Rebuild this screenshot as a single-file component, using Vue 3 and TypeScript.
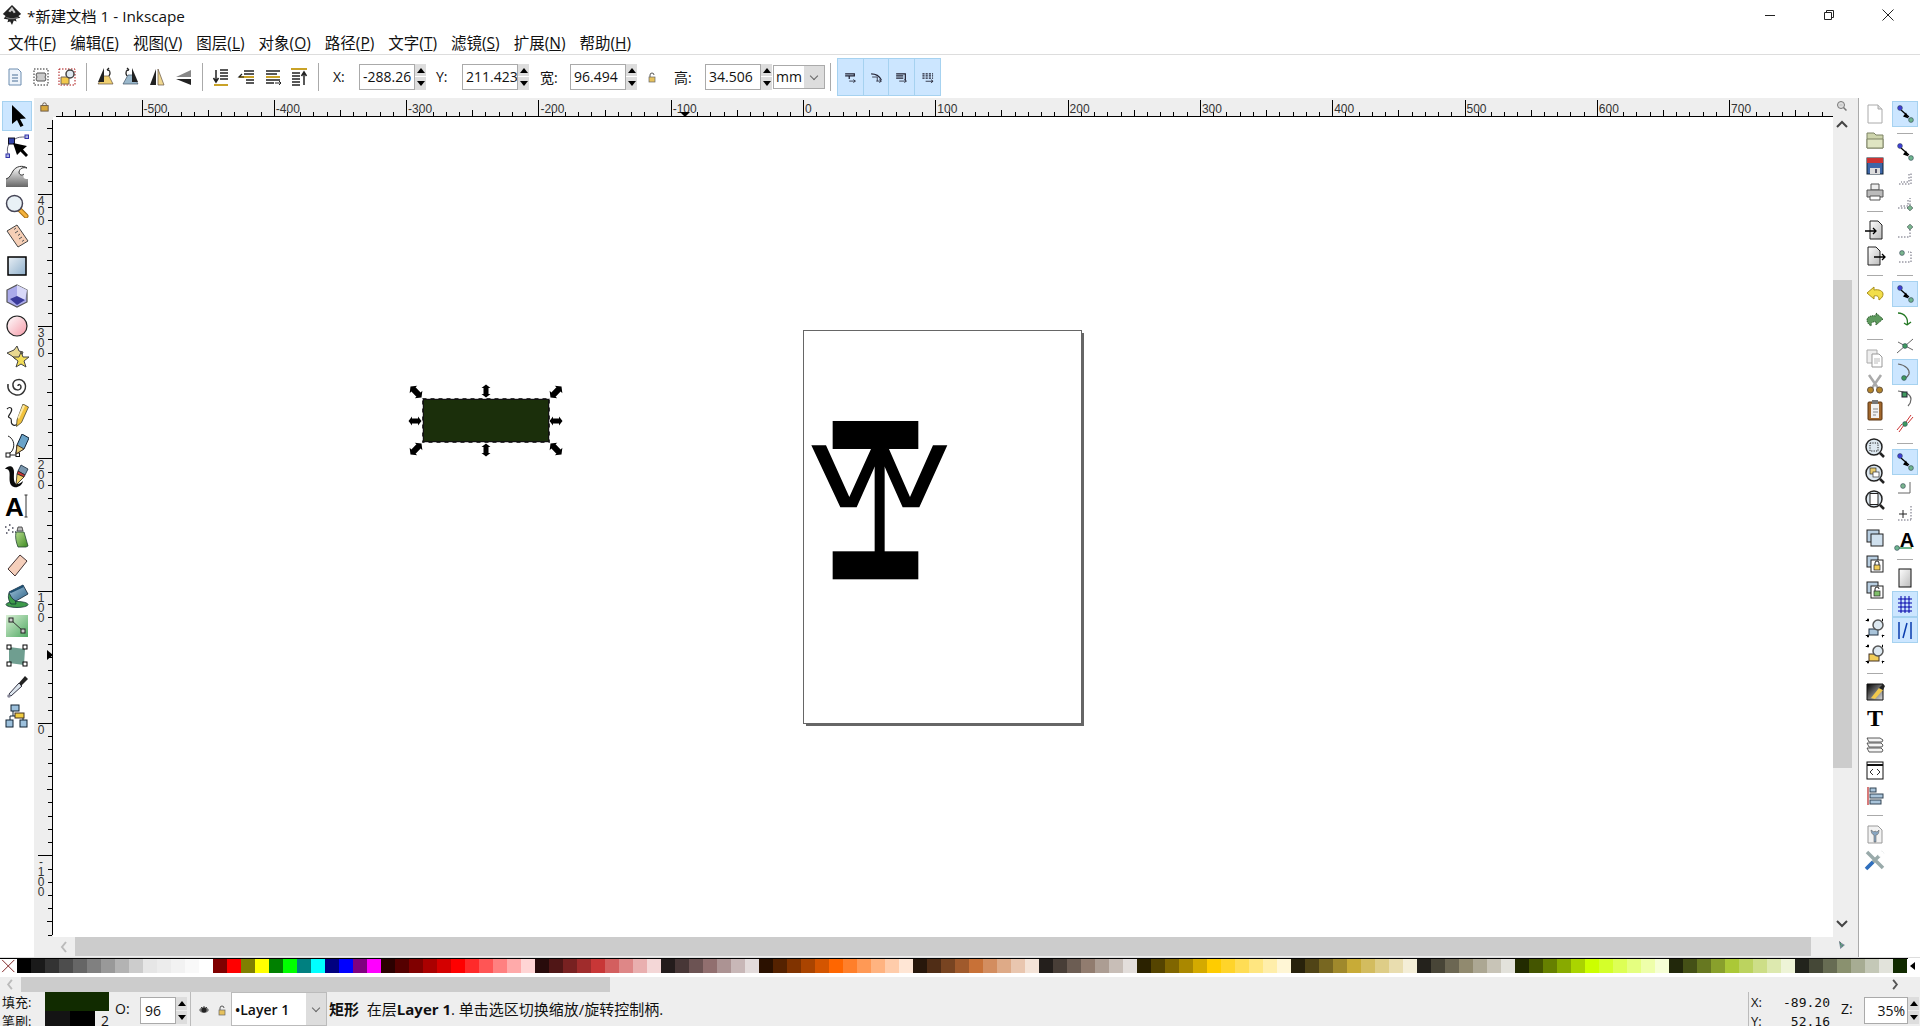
<template>
  <div class="app">
    <svg class="defs" width="0" height="0">
      <defs>
        <linearGradient id="gBlue" x1="0" y1="0" x2="1" y2="1"><stop offset="0" stop-color="#e8eff5" /><stop offset="1" stop-color="#8fb0cc" /></linearGradient>
        <linearGradient id="gPink" x1="0" y1="0" x2="1" y2="1"><stop offset="0" stop-color="#fff" /><stop offset="1" stop-color="#f59aa8" /></linearGradient>
        <linearGradient id="gGreen" x1="0" y1="0" x2="1" y2="1"><stop offset="0" stop-color="#d9f0d5" /><stop offset="1" stop-color="#4fa862" /></linearGradient>
        <linearGradient id="gGray" x1="0" y1="0" x2="0" y2="1"><stop offset="0" stop-color="#fff" /><stop offset="1" stop-color="#666" /></linearGradient>
        <linearGradient id="gDoc" x1="0" y1="0" x2="1" y2="1"><stop offset="0" stop-color="#fff" /><stop offset="1" stop-color="#bbb" /></linearGradient>
        <linearGradient id="gStroke" x1="0" y1="0" x2="1" y2="1"><stop offset="0" stop-color="#000" /><stop offset="1" stop-color="#ddd" /></linearGradient>
        <linearGradient id="gCan" x1="0" y1="0" x2="1" y2="1"><stop offset="0" stop-color="#b7dc8c" /><stop offset="1" stop-color="#3d8a22" /></linearGradient>
        <linearGradient id="gBucket" x1="0" y1="0" x2="1" y2="1"><stop offset="0" stop-color="#a9cbe0" /><stop offset="1" stop-color="#2f6488" /></linearGradient>
      </defs>
    </svg>

    <div class="titlebar">
      <svg class="logo" viewBox="0 0 24 24">
        <path d="M12 1 22 11l-3 2 2 2-5 1 1 3-3-1-2 5-2-4-3 1 1-3-5-1 2-3-3-2z" fill="#222" />
        <path d="M12 3 8 8l2 1 2-2 2 3 2-1z" fill="#ccc" />
        <path d="M4 13c5 3 11 3 16 0-3 5-13 5-16 0z" fill="#777" />
      </svg>
      <span class="title">*新建文档 1 - Inkscape</span>
      <div class="winbtns">
        <svg viewBox="0 0 12 12"><path d="M1 6.5h10" stroke="#222" fill="none" /></svg>
        <svg viewBox="0 0 12 12"><path d="M1.5 3.5h7v7h-7zM3.5 3.5v-2h7v7h-2" stroke="#222" fill="none" /></svg>
        <svg viewBox="0 0 12 12"><path d="M.5.5l11 11M11.5.5l-11 11" stroke="#222" fill="none" /></svg>
      </div>
    </div>

    <div class="menubar">
      <span v-for="m in menus" :key="m.label" class="menu">{{ m.label }}(<u>{{ m.key }}</u>)</span>
    </div>

    <div class="toolbar">
      <template v-for="(it, i) in selectBar" :key="i">
        <i v-if="it === '|'" class="vsep"></i>
        <svg v-else class="tbicon" viewBox="0 0 24 24" v-html="icons[it]"></svg>
      </template>
      <label class="flabel x">X:</label>
      <input class="num" value="-288.26" readonly />
      <span class="spin"><b class="up"></b><b class="down"></b></span>
      <label class="flabel y">Y:</label>
      <input class="num" value="211.423" readonly />
      <span class="spin"><b class="up"></b><b class="down"></b></span>
      <label class="flabel w">宽:</label>
      <input class="num" value="96.494" readonly />
      <span class="spin"><b class="up"></b><b class="down"></b></span>
      <svg class="smalllock" viewBox="0 0 12 12" v-html="icons.lock"></svg>
      <label class="flabel h">高:</label>
      <input class="num" value="34.506" readonly />
      <span class="spin"><b class="up"></b><b class="down"></b></span>
      <div class="unit"><span>mm</span><i class="chev"></i></div>
      <i class="vsep last"></i>
      <div class="transforms">
        <svg v-for="t in ['tf1', 'tf2', 'tf3', 'tf4']" :key="t" viewBox="0 0 24 24" v-html="icons[t]"></svg>
      </div>
    </div>

    <div class="workspace">
      <div class="toolbox">
        <div v-for="(t, i) in tools" :key="t" class="tool" :class="{ on: i === 0 }">
          <svg viewBox="0 0 24 24" v-html="icons[t]"></svg>
        </div>
      </div>

      <div class="center">
        <svg class="hruler" viewBox="34 98 1799 19">
          <rect x="34" y="98" width="1799" height="19" fill="#eeeeee" />
          <svg x="39" y="101" width="11" height="11" viewBox="0 0 12 12" v-html="icons.rulerLock"></svg>
          <path d="M56 116.5H1833" stroke="#000" />
          <path v-for="t in hTicks" :key="t.x" :d="`M${t.x} 116V${116 - t.len}`" stroke="#000" />
          <text v-for="l in hLabels" :key="l.x" :x="l.x + 2" y="113" class="rtext">{{ l.text }}</text>
          <path d="M680 112h10l-5 5z" fill="#000" />
        </svg>
        <div class="canvasrow">
          <svg class="vruler" viewBox="34 117 19 820">
            <rect x="34" y="117" width="19" height="820" fill="#eeeeee" />
            <path d="M52.5 120V935" stroke="#000" />
            <path v-for="t in vTicks" :key="t.y" :d="`M52 ${t.y}H${52 - t.len}`" stroke="#000" />
            <template v-for="l in vLabels" :key="l.y">
              <text v-for="(c, k) in l.text" :key="k" x="41" :y="l.y + 11 + k * 10" class="rtext mid">{{ c }}</text>
            </template>
            <path d="M47 650l6 5-6 5z" fill="#000" />
          </svg>
          <svg class="canvas" viewBox="53 117 1780 820">
            <rect x="806" y="333" width="278" height="393" fill="#666" />
            <rect x="803.5" y="330.5" width="278" height="393" fill="#fff" stroke="#666" />
            <g transform="translate(790 320) scale(0.3333)">
              <rect x="128" y="303" width="257" height="84" />
              <rect x="128" y="694" width="257" height="84" />
              <rect x="254" y="380" width="30" height="320" />
              <path d="M64 376h44l70 155 65-144h54l63 144 69-155h43l-84 186h-50L284 440h-30l-54 122h-49z" />
            </g>
            <rect x="423" y="399" width="126" height="43" fill="#1b2f0b" stroke="#111" stroke-width="2" />
            <rect x="422.5" y="398.5" width="127" height="44" fill="none" stroke="#ccc" />
            <rect x="422.5" y="398.5" width="127" height="44" fill="none" stroke="#333" stroke-dasharray="4 4" />
            <path
              v-for="h in handles"
              :key="h.x + '-' + h.y"
              d="M-6.5 0-3-4.5V-2.500H3V-4.500L6.500 0 3 4.500V2.500H-3V4.500Z"
              :transform="`translate(${h.x} ${h.y}) rotate(${h.r}) scale(${h.s})`"
            />
          </svg>
        </div>
        <div class="hscroll">
          <svg class="arrow" viewBox="0 0 10 14"><path d="M7 2 3 7l4 5" fill="none" stroke="#bbb" stroke-width="2" /></svg>
          <div class="hthumb"></div>
        </div>
      </div>

      <div class="vscroll">
        <svg class="zoomfit" viewBox="0 0 24 24" v-html="icons.zoomSmall"></svg>
        <svg class="vup" viewBox="0 0 14 10"><path d="M2 8l5-5 5 5" fill="none" stroke="#444" stroke-width="2" /></svg>
        <div class="vthumb"></div>
        <svg class="vdown" viewBox="0 0 14 10"><path d="M2 2l5 5 5-5" fill="none" stroke="#444" stroke-width="2" /></svg>
        <svg class="cmsicon" viewBox="0 0 24 24" v-html="icons.cms"></svg>
      </div>

      <div class="rightbars">
        <div class="rcol">
          <template v-for="(it, i) in commands" :key="i">
            <div v-if="it === '|'" class="hsep"></div>
            <div v-else class="rbtn"><svg viewBox="0 0 24 24" v-html="icons[it]"></svg></div>
          </template>
        </div>
        <div class="rcol snaps">
          <template v-for="(it, i) in snaps" :key="i">
            <div v-if="it === '|'" class="hsep"></div>
            <div v-else class="rbtn" :class="{ on: it.endsWith('!') }">
              <svg viewBox="0 0 24 24" v-html="icons[it.replace('!', '')]"></svg>
            </div>
          </template>
        </div>
      </div>
    </div>

    <div class="palette">
      <svg class="nocolor" viewBox="0 0 15 15"><rect width="15" height="15" fill="#fff" /><path d="M1 1l13 13M14 1 1 14" stroke="#7a1a1a" /></svg>
      <div class="swatches">
        <i v-for="(c, i) in swatches" :key="i" :style="{ background: c }"></i>
      </div>
      <span class="palarrow"></span>
    </div>

    <div class="palscroll">
      <svg class="parrow" viewBox="0 0 10 14"><path d="M7 2 3 7l4 5" fill="none" stroke="#bbb" stroke-width="2" /></svg>
      <div class="palthumb"></div>
      <svg class="parrow right" viewBox="0 0 10 14"><path d="M3 2l4 5-4 5" fill="none" stroke="#555" stroke-width="2" /></svg>
    </div>

    <div class="statusbar">
      <div class="fslabels"><span>填充:</span><span>笔刷:</span></div>
      <div class="fsboxes">
        <div class="fillbox"></div>
        <div class="strokerow"><div class="strokebox"><i></i><i></i></div><span>2</span></div>
      </div>
      <span class="olabel">O:</span>
      <input class="num opacity" value="96" readonly />
      <span class="spin"><b class="up"></b><b class="down"></b></span>
      <i class="stsep"></i>
      <svg class="eye" viewBox="0 0 12 12" v-html="icons.eye"></svg>
      <svg class="stlock" viewBox="0 0 12 12" v-html="icons.lock"></svg>
      <div class="layer"><span>•Layer 1</span><i class="chev"></i></div>
      <div class="message"><b>矩形</b>&nbsp; 在层<b>Layer 1</b>. 单击选区切换缩放/旋转控制柄.</div>
      <i class="stsep coords"></i>
      <div class="xy">
        <div><span>X:</span><code>-89.20</code></div>
        <div><span>Y:</span><code>52.16</code></div>
      </div>
      <span class="zlabel">Z:</span>
      <input class="num zoom" value="35%" readonly />
      <span class="spin"><b class="up"></b><b class="down"></b></span>
    </div>
  </div>
</template>

<script setup lang="ts">
const menus = [
  { label: '文件', key: 'F' },
  { label: '编辑', key: 'E' },
  { label: '视图', key: 'V' },
  { label: '图层', key: 'L' },
  { label: '对象', key: 'O' },
  { label: '路径', key: 'P' },
  { label: '文字', key: 'T' },
  { label: '滤镜', key: 'S' },
  { label: '扩展', key: 'N' },
  { label: '帮助', key: 'H' },
]

const selectBar = ['selAll', 'selLayers', 'selSame', '|', 'rotL', 'rotR', 'flipH', 'flipV', '|', 'raiseTop', 'raise', 'lower', 'lowerBot', '|']

const tools = ['select', 'node', 'tweak', 'zoom', 'measure', 'rect', 'box3d', 'circle', 'star', 'spiral', 'pencil', 'pen', 'callig', 'text', 'spray', 'eraser', 'bucket', 'gradient', 'mesh', 'dropper', 'connector']

const commands = [
  'new', 'open', 'save', 'print', '|', 'import', 'export', '|', 'undo', 'redo', '|',
  'copy', 'cut', 'paste', '|', 'zoomSel', 'zoomDraw', 'zoomPage', '|',
  'dup', 'clone', 'unlink', '|', 'group', 'ungroup', '|',
  'fillStroke', 'textT', 'layers', 'xml', 'align', '|', 'prefs', 'toolsW',
]

const snaps = [
  'snapOn!', '|', 'snapOn', 'bbox1', 'bbox2', 'bbox3', 'bbox4', '|',
  'snapOn!', 'path1', 'path2', 'path3!', 'path4', 'path5', '|',
  'snapOn!', 'other1', 'other2', 'otherA', '|', 'pageSnap', 'grid!', 'guide!',
]

// canvas scale: 100 user units = 132.3 px, origin at x 803 / y 723
const hTicks: { x: number; len: number }[] = []
for (let i = -56; i < 78; i++) {
  const x = Math.round(803 + i * 13.23) + 0.5
  if (x > 56) hTicks.push({ x, len: i % 10 === 0 ? 16 : i % 5 === 0 ? 6 : 4 })
}
const hLabels = [-500, -400, -300, -200, -100, 0, 100, 200, 300, 400, 500, 600, 700].map((v) => ({
  x: 803 + v * 1.323,
  text: String(v),
}))

const vTicks: { y: number; len: number }[] = []
for (let i = -16; i <= 45; i++) {
  const y = Math.round(723 - i * 13.23) + 0.5
  if (y > 120 && y < 936) vTicks.push({ y, len: i % 10 === 0 ? 14 : i % 5 === 0 ? 5 : 4 })
}
const vLabels = [400, 300, 200, 100, 0, -100].map((v) => ({ y: 723 - v * 1.323, text: String(v) }))

const handles = [
  { x: 416, y: 392, r: 45, s: 1.2 },
  { x: 486, y: 391, r: 90, s: 1 },
  { x: 556, y: 392, r: -45, s: 1.2 },
  { x: 415, y: 421, r: 0, s: 1 },
  { x: 556, y: 421, r: 0, s: 1 },
  { x: 416, y: 449, r: -45, s: 1.2 },
  { x: 486, y: 450, r: 90, s: 1 },
  { x: 556, y: 449, r: 45, s: 1.2 },
]

const swatches = [
  '#000000', '#1a1a1a', '#333333', '#4d4d4d', '#666666', '#808080', '#999999', '#b3b3b3', '#cccccc', '#e6e6e6', '#ececec', '#f2f2f2', '#f9f9f9', '#ffffff',
  '#800000', '#ff0000', '#808000', '#ffff00', '#008000', '#00ff00', '#008080', '#00ffff', '#000080', '#0000ff', '#800080', '#ff00ff',
  '#2b0000', '#550000', '#800000', '#aa0000', '#d40000', '#ff0000', '#ff2a2a', '#ff5555', '#ff8080', '#ffaaaa', '#ffd5d5',
  '#280b0b', '#501616', '#782121', '#a02c2c', '#c83737', '#d35f5f', '#de8787', '#e9afaf', '#f4d7d7',
  '#241c1c', '#483737', '#6c5353', '#916f6f', '#ac9393', '#c8b7b7', '#e3dbdb',
  '#2b1100', '#552200', '#803300', '#aa4400', '#d45500', '#ff6600', '#ff7f2a', '#ff9955', '#ffb380', '#ffccaa', '#ffe6d5',
  '#28170b', '#502d16', '#784421', '#a05a2c', '#c87137', '#d38d5f', '#deaa87', '#e9c6af', '#f4e3d7',
  '#241f1c', '#483e37', '#6c5d53', '#917c6f', '#ac9d93', '#c8beb7', '#e3dedb',
  '#2b2200', '#554400', '#806600', '#aa8800', '#d4aa00', '#ffcc00', '#ffd42a', '#ffdd55', '#ffe680', '#ffeeaa', '#fff6d5',
  '#28220b', '#504416', '#786721', '#a0892c', '#c8ab37', '#d3bc5f', '#decd87', '#e9ddaf', '#f4eed7',
  '#24221c', '#484537', '#6c6753', '#918a6f', '#aca793', '#c8c4b7', '#e3e2db',
  '#222b00', '#445500', '#668000', '#88aa00', '#aad400', '#ccff00', '#d4ff2a', '#ddff55', '#e5ff80', '#eeffaa', '#f6ffd5',
  '#22280b', '#445016', '#677821', '#89a02c', '#abc837', '#bcd35f', '#cdde87', '#dde9af', '#eef4d7',
  '#22241c', '#454837', '#676c53', '#8a916f', '#a7ac93', '#c4c8b7', '#e2e3db',
  '#112b00',
]

const nodeDot = (x: number, y: number, c: string) => `<circle cx="${x}" cy="${y}" r="2.4" fill="${c}" stroke="#345" stroke-width=".6"/>`
const dotted = 'stroke="#667" stroke-dasharray="1.500 1.500" fill="none"'
const greenNode = (x: number, y: number) => `<rect x="${x - 2}" y="${y - 2}" width="4" height="4" transform="rotate(45 ${x} ${y})" fill="#7ab58e" stroke="#344" stroke-width=".6"/>`

const icons: Record<string, string> = {
  // select bar
  selAll: '<path d="M6 4h9l3 3v13H6z" fill="#eef4fb" stroke="#6c8db0"/><path d="M9 10h6M9 13h6M9 16h6" stroke="#4a6f95"/>',
  selLayers: '<rect x="5" y="4" width="14" height="16" fill="none" stroke="#222" stroke-dasharray="1.500 1.500"/><path d="M8 8h8l1 2-1 2 1 2-1 2H8l-1-2 1-2-1-2z" fill="#ccc" stroke="#555"/>',
  selSame: '<rect x="4" y="4" width="16" height="16" fill="none" stroke="#a11" stroke-dasharray="1.500 1.500"/><path d="M6 12h8v7H6z" fill="#f2c94c" stroke="#765"/><circle cx="15" cy="9" r="4" fill="#dde8f0" stroke="#444" stroke-width="1.500"/>',
  rotL: '<path d="M5 19h15l-4-8H10z" fill="#f0d070" stroke="#654" stroke-width=".7"/><path d="M11 3v14H5z" fill="#222"/><path d="M14 5c3 0 4 3 2 6M14 5l2-2M14 5l3 1" fill="none" stroke="#222" stroke-width="1.300"/>',
  rotR: '<path d="M4 19h15l-5-9H9z" fill="#9ab8cc" stroke="#456" stroke-width=".7"/><path d="M13 3v14h6z" fill="#222"/><path d="M10 5c-3 0-4 3-2 6M10 5 8 3M10 5 7 6" fill="none" stroke="#222" stroke-width="1.300"/>',
  flipH: '<path d="M11 4v16H5z" fill="#222"/><path d="M13 4v16h6z" fill="#f0d890" stroke="#654" stroke-width=".7"/>',
  flipV: '<path d="M20 5v7H5z" fill="#888"/><path d="M20 14v6L5 14z" fill="#222"/><path d="M9 13h11" stroke="#fff" stroke-dasharray="1 1"/>',
  raiseTop: '<path d="M5 20h14" stroke="#c9a227" stroke-width="2"/><path d="M7 5v12M4.500 13 7 17l2.500-4" fill="none" stroke="#222" stroke-width="1.500"/><path d="M11 5h8M11 8h8M11 11h8M11 14h8" stroke="#222" stroke-width="1.500"/>',
  raise: '<path d="M9 6h10M9 9h10M11 15h8M11 18h8" stroke="#222" stroke-width="1.500"/><path d="M4 12h15" stroke="#c9a227" stroke-width="2"/><path d="M9 12 4 12l3-3" fill="none" stroke="#222" stroke-width="1.200"/>',
  lower: '<path d="M5 6h14M5 9h11M5 15h14M5 18h8" stroke="#222" stroke-width="1.500"/><path d="M5 12h14" stroke="#c9a227" stroke-width="2"/><path d="M14 18h6l-2-2m2 2-2 2" fill="none" stroke="#222"/>',
  lowerBot: '<path d="M4 4h16" stroke="#c9a227" stroke-width="2"/><path d="M5 8h8M5 11h8M5 14h8M5 17h8M5 20h8" stroke="#222" stroke-width="1.500"/><path d="M17 20V8M14.500 11 17 7l2.500 4" fill="none" stroke="#222" stroke-width="1.500"/>',
  tf1: '<path d="M7 9h9v2h-5v3M7 11h4" fill="none" stroke="#223" stroke-width="1.200"/><path d="M11 16h6M15 14.500l2 1.500-2 1.500" fill="none" stroke="#223" stroke-width=".8"/>',
  tf2: '<path d="M7 9c5 0 8 2 10 6" fill="none" stroke="#223" stroke-width="1.200"/><path d="M8 12h5v4M12 16h5M15 14.500l2 1.500-2 1.500" fill="none" stroke="#223" stroke-width=".8"/>',
  tf3: '<path d="M7 9h9v6M7 11h7M7 13h7" fill="none" stroke="#223" stroke-width="1.200"/><path d="M10 16h7M15 14.500l2 1.500-2 1.500" fill="none" stroke="#223" stroke-width=".8"/>',
  tf4: '<path d="M7 9h10M7 11h10M7 13h10" stroke="#223" stroke-width="1.200" stroke-dasharray="2 1"/><path d="M10 16h7M15 14.500l2 1.500-2 1.500" fill="none" stroke="#223" stroke-width=".8"/>',
  lock: '<path d="M4 6V4a2 2 0 0 1 4 0" fill="none" stroke="#555"/><rect x="3" y="6" width="6" height="5" fill="#e6c15c" stroke="#666" stroke-width=".7"/>',
  rulerLock: '<path d="M4 5V4a2 2 0 0 1 4 0v1" fill="none" stroke="#654"/><rect x="2" y="5" width="8" height="6" fill="#d8a83c" stroke="#654"/>',
  eye: '<path d="M1 6c2-4 8-4 10 0-2 4-8 4-10 0z" fill="#777"/><circle cx="6" cy="6" r="2.500" fill="#222"/><path d="M3 3l1 1M6 2v1M9 3 8 4" stroke="#444"/>',
  zoomSmall: '<circle cx="10" cy="10" r="7" fill="#ddd" stroke="#777" stroke-width="2"/><path d="M15 15l6 6" stroke="#777" stroke-width="3"/><path d="M7 10h6" stroke="#999"/>',
  cms: '<path d="M7 6l10 6-8 7z" fill="#7a8a9a"/><path d="M8 8l3 2-2 3zM11 13l3-1-2 4z" fill="#3d9a5a"/><path d="M7 6l3 2" stroke="#223"/>',
  // tools
  select: '<path d="M7 1v19l5-4 3.500 7 3-1.500L15 15l6-.5z" fill="#000"/>',
  node: '<path d="M10 5c3-2 6-2 10-2M4 10c-2 3-2 7-1 10" fill="none" stroke="#667"/><rect x="20" y="1" width="3.500" height="3.500" fill="#aab4e0" stroke="#33a"/><rect x="1" y="20" width="3.500" height="3.500" fill="#aab4e0" stroke="#33a"/><rect x="3.500" y="4" width="6" height="6" fill="#3344aa" stroke="#112"/><path d="M8 9l14 3-4 3.500 5 5.500-2 2-5.500-5.500L12 21z" fill="#000"/>',
  tweak: '<path d="M1 23v-8c4-1 5-5 7-8 3-5 10-6 14-3-4-1-7 0-8 4 0 3 3 4 5 2-1 3-1 5 4 5v8z" fill="url(#gGray)"/><path d="M1 15c4-1 5-5 7-8 3-5 10-6 14-3-4-1-7 0-8 4 0 3 3 4 5 2" fill="none" stroke="#333"/>',
  zoom: '<path d="M14 15l7 7" stroke="#a66e12" stroke-width="5" stroke-linecap="round"/><path d="M14 15l7 7" stroke="#f4b23c" stroke-width="3" stroke-linecap="round"/><circle cx="9.500" cy="9.500" r="8" fill="#e9f1f6" stroke="#445" stroke-width="1.500"/>',
  measure: '<path d="M2 7 12 1l11 16-10 6z" fill="#f6cfb6" stroke="#444"/><path d="M11 4l-2 1.500M13 7l-3 2M15 10l-2 1.500M17 13l-3 2M19 16l-2 1.500" stroke="#555"/>',
  rect: '<rect x="3" y="3" width="18" height="18" fill="url(#gBlue)" stroke="#000" stroke-width="1.500"/>',
  box3d: '<path d="M12 1l10 5v12l-10 5-10-5V6z" fill="#aaaaea" stroke="#555" stroke-width="1.200"/><path d="M12 1l10 5-2 10-8-3z" fill="#d8d8f8"/><path d="M5 15l7-3 8 4-8 5z" fill="#3a3a9a"/>',
  circle: '<circle cx="12" cy="12" r="10" fill="url(#gPink)" stroke="#222" stroke-width="1.200"/>',
  star: '<path d="M2 9l7-3 3-4 2 5 4 1-2 5-6 2-3-3z" fill="#e8d890" stroke="#444"/><path d="M16 8l2 5 6 0-5 4 2 6-5-3-5 3 2-6-5-4 6 0z" fill="#f2dd58" stroke="#444"/>',
  spiral: '<path d="M13 12c0-2 3-2 3 1 0 4-7 4-8-1-1-6 7-9 11-4 4 6-1 14-8 13-5-1-9-5-8-11" fill="none" stroke="#333" stroke-width="1.500"/>',
  pencil: '<path d="M2 5c3-3 6-1 4 3s-4 5-1 6 0 4 2 6 4 2 6-1" fill="none" stroke="#222" stroke-width="1.200"/><path d="M18 0l5.500 3-7 15.500-5 4 .5-6.500z" fill="#f2c23c" stroke="#443" stroke-width=".8"/><path d="M18 1l2 1-6 13-1.500-1z" fill="#fbe9a8"/>',
  pen: '<path d="M3 2c5 2 7 8 5 13-1 3-3 4-5 5" fill="none" stroke="#222"/><rect x="1" y="19" width="4" height="4" fill="#fff" stroke="#111"/><rect x="11" y="19" width="3.500" height="3.500" fill="#fff" stroke="#111"/><path d="M5 21h6" stroke="#222"/><path d="M17 0l7 4-5 11-8 4 1-8z" fill="#6aa3c8" stroke="#123"/><path d="M12 11l7 4-8 5z" fill="#e8cd78" stroke="#432"/>',
  callig: '<path d="M0 5c3-4 9-4 9 3 0 5-1 11 3 12 2 0 4-1 6-3-1 5-6 7-9 6C2 21 6 10 4 7 3 5 2 5 0 5z" fill="#0a0a0a"/><path d="M16 1l7 4-3 6-7-4z" fill="#7a97ae" stroke="#123" stroke-width=".8"/><path d="M13 7l7 4-1 2-7-3z" fill="#c33" stroke="#222" stroke-width=".8"/><path d="M12 10l7 3-8 8z" fill="#f2d26a" stroke="#222" stroke-width=".8"/>',
  text: '<text x="0" y="22" class="icontext" font-size="26">A</text><path d="M19.500 1h3M21 1v22M19.500 23h3" stroke="#333"/>',
  spray: '<path d="M0 3h2M4 1h2M3 6h2M7 4h2M7 8h2M1 9h2M10 8h1" stroke="#445" stroke-width="1.500" stroke-dasharray="1.500 .7"/><path d="M13 3h4l1 4h-6z" fill="#bbb" stroke="#333" stroke-width=".8"/><path d="M11 8h8l4 14-2 1H13c-2-5-3-10-2-15z" fill="url(#gCan)" stroke="#243" stroke-width=".8"/>',
  eraser: '<path d="M3 15 15 1l7 6-12 15z" fill="#f5cfbb" stroke="#433"/>',
  bucket: '<ellipse cx="12" cy="20.500" rx="11" ry="3" fill="#3d9a4a" stroke="#133" stroke-width=".8"/><path d="M4 9c-1 3-1 7 2 11h5c-1-3 0-5 2-6z" fill="#3d9a4a" stroke="#133" stroke-width=".8"/><path d="M4 8l14-7 5 9-12 7c-3-1-6-5-7-9z" fill="url(#gBucket)" stroke="#123" stroke-width=".8"/><path d="M4 8l14-7 1 2-13 6z" fill="#1f4f70"/>',
  gradient: '<rect x="1" y="1" width="22" height="22" fill="url(#gGreen)"/><path d="M6 6l12 11" stroke="#333"/><rect x="4" y="4" width="4" height="4" fill="#ccc" stroke="#222"/><rect x="16" y="15" width="4" height="4" fill="#ccc" stroke="#222"/>',
  mesh: '<path d="M4 3l16 2-1 16-15-2z" fill="#6f9e90"/><rect x="2" y="1" width="4" height="4" fill="#fff" stroke="#000"/><rect x="18" y="1" width="4" height="4" fill="#fff" stroke="#000"/><rect x="2" y="18" width="4" height="4" fill="#fff" stroke="#000"/><rect x="18" y="18" width="4" height="4" fill="#fff" stroke="#000"/>',
  dropper: '<path d="M4 20 14 9l3 3L6 22z" fill="#dde6ee" stroke="#334"/><path d="M14 9l6-7 3 3-7 7z" fill="#222"/><circle cx="4" cy="22" r="1.800" fill="#889"/>',
  connector: '<rect x="6" y="1" width="8" height="6" fill="#9cc0dc" stroke="#123"/><rect x="1" y="16" width="7" height="7" fill="#9cc0dc" stroke="#123"/><rect x="15" y="16" width="7" height="7" fill="#9cc0dc" stroke="#123"/><rect x="10" y="9" width="9" height="5" fill="#f0cc40" stroke="#432"/><path d="M8 7v5h2M5 16v-4h3M18 14v2" fill="none" stroke="#123"/>',
  // commands
  new: '<path d="M5 3h10l4 4v14H5z" fill="#fff" stroke="#aaa"/><path d="M15 3v4h4" fill="#ddd" stroke="#aaa"/>',
  open: '<path d="M4 5h7l2 2h7v13H4z" fill="#cdd4ac" stroke="#7c8264"/><path d="M4 11h16v9H4z" fill="#dfe5c2" stroke="#7c8264"/>',
  save: '<rect x="4" y="4" width="16" height="16" fill="#3d66a8" stroke="#123"/><rect x="4" y="4" width="16" height="5" fill="#c33"/><rect x="7" y="14" width="10" height="6" fill="#ddd"/><rect x="12" y="15" width="2" height="4" fill="#556"/>',
  print: '<path d="M8 4h8v6H8z" fill="#eee" stroke="#555"/><path d="M4 10h16v7H4z" fill="#bbb" stroke="#555"/><path d="M7 16h10v4H7z" fill="#fff" stroke="#555"/>',
  import: '<path d="M7 3h8l4 4v14H7z" fill="url(#gDoc)" stroke="#222"/><path d="M2 13h11M10 10l3 3-3 3" fill="none" stroke="#000" stroke-width="1.300"/>',
  export: '<path d="M5 3h8l4 4v14H5z" fill="url(#gDoc)" stroke="#222"/><path d="M11 13h11M19 10l3 3-3 3" fill="none" stroke="#000" stroke-width="1.300"/>',
  undo: '<path d="M11 5 4 11l7 6v-3c4-1 5 1 5 4 3-2 4-4 4-6 0-3-4-5-9-4z" fill="#f2de4a" stroke="#a98f1a"/>',
  redo: '<path d="M13 5l7 6-7 6v-3c-4-1-5 1-5 4-3-2-4-4-4-6 0-3 4-5 9-4z" fill="#5e9a5e" stroke="#2c5c2c" stroke-dasharray="1.500 .8"/>',
  copy: '<path d="M4 4h10v13H4z" fill="#eee" stroke="#aaa"/><path d="M9 8h7l3 3v10H9z" fill="#fff" stroke="#999"/><path d="M11 13h6M11 15h6M11 17h4" stroke="#bbb"/>',
  cut: '<path d="M6 3l9 13M18 3 9 16" stroke="#aaa" stroke-width="2.500"/><circle cx="7.500" cy="18" r="3" fill="#b5852a" stroke="#654"/><circle cx="16.500" cy="18" r="3" fill="#b5852a" stroke="#654"/>',
  paste: '<rect x="5" y="4" width="14" height="18" rx="1" fill="#a1672c" stroke="#5a3510"/><path d="M8 6h8v14H8z" fill="#f2f2f2"/><rect x="9" y="2" width="6" height="4" fill="#777"/><path d="M10 11h5M10 14h5M10 17h3" stroke="#888"/>',
  zoomSel: '<circle cx="11" cy="11" r="8" fill="#dde8f0" stroke="#222" stroke-width="1.500"/><rect x="7" y="7" width="8" height="8" fill="none" stroke="#222" stroke-dasharray="1.200 1.200"/><path d="M17 17l4 4" stroke="#222" stroke-width="2.500"/>',
  zoomDraw: '<circle cx="11" cy="11" r="8" fill="#dde8f0" stroke="#222" stroke-width="1.500"/><rect x="7" y="6" width="6" height="6" fill="#e6c96a" stroke="#333" stroke-width=".7"/><rect x="10" y="10" width="6" height="5" fill="#fff" stroke="#333" stroke-width=".7"/><path d="M17 17l4 4" stroke="#222" stroke-width="2.500"/>',
  zoomPage: '<circle cx="11" cy="11" r="8" fill="#dde8f0" stroke="#222" stroke-width="1.500"/><rect x="7" y="5.500" width="8" height="11" fill="#fff" stroke="#222"/><path d="M17 17l4 4" stroke="#222" stroke-width="2.500"/>',
  dup: '<rect x="4" y="4" width="12" height="12" fill="#b9cfe2" stroke="#222"/><rect x="8" y="8" width="12" height="12" fill="#cfe0ee" stroke="#222"/>',
  clone: '<rect x="4" y="4" width="11" height="11" fill="#b9cfe2" stroke="#222"/><rect x="8" y="8" width="12" height="12" fill="#fff" stroke="#222"/><path d="M12 13v-2a2 2 0 0 1 4 0v2" fill="none" stroke="#222"/><rect x="11" y="13" width="6" height="5" fill="#f2cd58" stroke="#222" stroke-width=".7"/>',
  unlink: '<rect x="4" y="4" width="11" height="11" fill="#b9cfe2" stroke="#222"/><rect x="8" y="8" width="12" height="12" fill="#fff" stroke="#222"/><path d="M12 13v-2a2 2 0 0 1 4 0" fill="none" stroke="#222"/><rect x="11" y="13" width="6" height="5" fill="#7fbf6a" stroke="#222" stroke-width=".7"/>',
  group: '<path d="M4 4h2M20 4h-1M4 20h2M20 20h-1M4 4v1M20 19v1M4 19v1" stroke="#000" stroke-width="2.500"/><rect x="6" y="13" width="9" height="6" fill="#a9c4da" stroke="#234"/><circle cx="15" cy="9" r="5" fill="#dde8f0" stroke="#555" stroke-width="1.500"/>',
  ungroup: '<path d="M4 4h2M20 4h-1M4 20h2M20 20h-1M4 4v1M20 19v1M4 19v1" stroke="#000" stroke-width="2.500"/><rect x="6" y="12" width="10" height="7" fill="#f2cd58" stroke="#432"/><circle cx="15" cy="9" r="5" fill="#dde8f0" stroke="#555" stroke-width="1.500"/>',
  fillStroke: '<path d="M4 4h16v16H4z" fill="url(#gStroke)" stroke="#111"/><path d="M8 18l8-10 4 2-8 9z" fill="#f2c94c"/><path d="M16 8l4-4 2 2-2 4z" fill="#222"/>',
  textT: '<text x="12" y="20" text-anchor="middle" class="iconserif" font-size="24">T</text>',
  layers: '<path d="M4 6h13l3 2-1 2H6zM4 11h14l2 2-1 2H6zM4 16h14l2 2-1 2H6z" fill="#f4f4f4" stroke="#333" stroke-width=".8"/>',
  xml: '<rect x="4" y="4" width="16" height="17" fill="#fff" stroke="#111"/><path d="M4 7h16" stroke="#111" stroke-width="2"/><path d="M10 11l-3 3 3 3M14 11l3 3-3 3" fill="none" stroke="#333"/>',
  align: '<path d="M5 3v18" stroke="#b22" stroke-width="1.200"/><rect x="7" y="4" width="6" height="4" fill="#a9c4da" stroke="#345"/><rect x="7" y="10" width="13" height="4" fill="#a9c4da" stroke="#345"/><rect x="7" y="16" width="11" height="4" fill="#a9c4da" stroke="#345"/>',
  prefs: '<path d="M5 4h10l4 4v13H5z" fill="#f2f2f2" stroke="#999"/><path d="M8 8c0 3 2 5 3 5v7h2v-7c2 0 3-2 3-5l-2 2-2-1-1 1z" fill="#88a6c2" stroke="#666" stroke-width=".6"/>',
  toolsW: '<path d="M4 4l16 16M20 4 4 20" stroke="#9aa" stroke-width="3.500"/><path d="M3 21l7-7" stroke="#2f6fbf" stroke-width="3.500"/><circle cx="18" cy="6" r="3" fill="#fff"/>',
  // snap bar
  snapOn: `<path d="M8 8l8 7" stroke="#000" stroke-width="1.200"/><path d="M13 10.500l2.500 6-5.500-2z" fill="#000"/>${nodeDot(7, 6, '#3f3fd8')}${nodeDot(18, 18, '#6db58e')}`,
  bbox1: `<path d="M6 18h12V6" ${dotted}/><path d="M16 8v8H8" ${dotted}/>`,
  bbox2: `<path d="M5 16h12V6" ${dotted}/><path d="M15 8v6H7" ${dotted}/>${greenNode(17, 16)}`,
  bbox3: `<path d="M5 19h12V10" ${dotted}/>${greenNode(17, 9)}`,
  bbox4: `<path d="M6 18h12V8h-3" ${dotted}/>${nodeDot(9, 9, '#7ab58e')}`,
  path1: '<path d="M5 5c6 0 11 5 9 12" fill="none" stroke="#272" stroke-width="1.300"/><path d="M14 17l-3-2M14 17l4-3" stroke="#272" fill="none" stroke-width="1.300"/>',
  path2: `<path d="M4 19 20 5M5 8l15 8" stroke="#666" fill="none"/>${nodeDot(12, 12, '#3f9a5f')}`,
  path3: `<path d="M5 4c8 1 12 6 11 10-1 3-3 4-5 5" fill="none" stroke="#666" stroke-width="1.200"/>${nodeDot(11, 18, '#3f9a5f')}`,
  path4: `<path d="M5 5c8 1 13 4 13 8 0 3-2 6-3 7" fill="none" stroke="#666" stroke-width="1.200"/><rect x="9" y="6" width="5" height="5" fill="#3f9a5f" stroke="#223"/>`,
  path5: `<path d="M4 18 9 12M6 20l5-7M13 10l5-7M15 11l5-6" stroke="#c33"/>${nodeDot(12, 12, '#3f9a5f')}`,
  other1: `<path d="M5 17h12V6" fill="none" stroke="#666"/>${nodeDot(10, 10, '#7ab58e')}`,
  other2: `<path d="M5 18h13" ${dotted}/><path d="M18 4v14" ${dotted}/><path d="M6 12h8M10 8v8" stroke="#222"/>`,
  otherA: `<text x="14" y="19" text-anchor="middle" class="icontext" font-size="20">A</text><path d="M3 20h16" stroke="#6db58e" stroke-width="2"/>${nodeDot(4, 20, '#6db58e')}`,
  pageSnap: '<rect x="6" y="3" width="12" height="18" fill="url(#gDoc)" stroke="#111"/>',
  grid: '<path d="M8 4v17M12 4v17M16 4v17M5 7h14M5 11h14M5 15h14M5 19h14" stroke="#0000aa" fill="none"/>',
  guide: '<path d="M6 4v17M18 4v17M10 20 14 5" stroke="#0a3dae" stroke-width="1.500" fill="none"/>',
}
</script>

<style>
html,
body {
  margin: 0;
  background: #fff;
  overflow: hidden;
}
.icontext {
  font-family: "Liberation Sans", sans-serif;
  font-weight: 700;
}
.iconserif {
  font-family: "Liberation Serif", serif;
  font-weight: 700;
}
</style>

<style scoped>
.app {
  width: 1920px;
  height: 1026px;
  display: flex;
  flex-direction: column;
  overflow: hidden;
  background: #fff;
  color: #111;
  font-family: "Open Sans", "Noto Sans CJK SC", sans-serif;
  font-size: 14px;
}
.defs {
  position: absolute;
}

/* title + menu */
.titlebar {
  height: 30px;
  display: flex;
  align-items: center;
  padding-left: 1px;
}
.logo {
  width: 22px;
  height: 22px;
}
.title {
  margin-left: 4px;
  font-size: 15.300px;
}
.winbtns {
  margin-left: auto;
  display: flex;
  gap: 47px;
  padding-right: 26px;
}
.winbtns svg {
  width: 12px;
  height: 12px;
}
.menubar {
  height: 24px;
  display: flex;
  align-items: center;
  gap: 14px;
  padding-left: 8px;
  border-bottom: 1px solid #ddd;
  font-size: 15.500px;
}

/* commands bar */
.toolbar {
  height: 43px;
  display: flex;
  align-items: center;
  padding-left: 2px;
}
.tbicon {
  width: 26px;
  height: 24px;
  flex: none;
}
.vsep {
  width: 1px;
  height: 28px;
  margin: 0 5.500px;
  background: #aaa;
  flex: none;
}
.vsep.last {
  margin: 0 6px 0 5px;
}
.flabel {
  flex: none;
  font-size: 14px;
}
.flabel.x {
  width: 26px;
  padding-left: 9px;
}
.flabel.y {
  width: 26px;
  padding-left: 10px;
}
.flabel.w {
  width: 30px;
  padding-left: 11px;
}
.flabel.h {
  width: 23px;
  margin-left: 16px;
  padding-right: 8px;
}
.num {
  width: 56px;
  height: 26px;
  box-sizing: border-box;
  border: 1px solid #aaa;
  background: #fff;
  padding: 0 0 0 3px;
  font: inherit;
  font-size: 14px;
  color: #111;
  outline: none;
  flex: none;
}
.spin {
  width: 11px;
  height: 26px;
  display: flex;
  flex-direction: column;
  gap: 1px;
  flex: none;
}
.spin b {
  flex: 1;
  background: #ddd;
  position: relative;
}
.spin b::after {
  content: "";
  position: absolute;
  left: 1.500px;
  top: 4px;
  border-left: 4px solid transparent;
  border-right: 4px solid transparent;
}
.spin .up::after {
  border-bottom: 5px solid #000;
}
.spin .down::after {
  border-top: 5px solid #000;
}
.smalllock {
  width: 12px;
  height: 12px;
  margin-left: 9px;
  flex: none;
}
.unit {
  margin-left: 1px;
  width: 52px;
  height: 24px;
  box-sizing: border-box;
  border: 1px solid #aaa;
  display: flex;
  align-items: center;
  font-size: 14px;
  flex: none;
}
.unit span {
  flex: 1;
  padding-left: 2px;
}
.chev {
  width: 20px;
  align-self: stretch;
  background: #ddd;
  position: relative;
  display: block;
  flex: none;
}
.chev::after {
  content: "";
  position: absolute;
  left: 7px;
  top: 50%;
  width: 5px;
  height: 5px;
  margin-top: -4px;
  border-right: 1px solid #666;
  border-bottom: 1px solid #666;
  transform: rotate(45deg);
}
.transforms {
  display: flex;
  height: 38px;
  flex: none;
  background: #cce6ff;
  border: 1px solid #a6d2f0;
  box-sizing: border-box;
}
.transforms svg {
  width: 25.500px;
  height: 36px;
  border-right: 1px solid #a6d2f0;
  box-sizing: border-box;
}
.transforms svg:last-child {
  border-right: 0;
}

/* main area */
.workspace {
  height: 859px;
  display: flex;
}
.toolbox {
  width: 34px;
  padding-top: 3px;
  flex: none;
  display: flex;
  flex-direction: column;
  align-items: center;
}
.tool {
  width: 30px;
  height: 30px;
  flex: none;
  display: flex;
  align-items: center;
  justify-content: center;
  box-sizing: border-box;
}
.tool.on {
  background: #cce6ff;
  border: 1px solid #a6d2f0;
}
.tool svg {
  width: 24px;
  height: 24px;
}
.center {
  width: 1799px;
  flex: none;
  display: flex;
  flex-direction: column;
}
.hruler {
  display: block;
  width: 1799px;
  height: 19px;
  flex: none;
  background: #eee;
}
.rtext {
  font-family: "Liberation Sans", sans-serif;
  font-size: 12px;
  fill: #333;
}
.rtext.mid {
  text-anchor: middle;
}
.canvasrow {
  height: 820px;
  display: flex;
  flex: none;
}
.vruler {
  display: block;
  width: 19px;
  height: 820px;
  flex: none;
}
.canvas {
  display: block;
  width: 1780px;
  height: 820px;
  flex: none;
  background: #fff;
}
.hscroll {
  height: 20px;
  background: #eee;
  display: flex;
  align-items: center;
  padding-left: 25px;
  flex: none;
}
.hscroll .arrow {
  width: 10px;
  height: 14px;
  flex: none;
}
.hthumb {
  margin-left: 6px;
  width: 1736px;
  height: 19px;
  align-self: flex-start;
  background: #ccc;
}
.vscroll {
  width: 25px;
  flex: none;
  background: #eee;
  border-right: 1px solid #aaa;
  display: flex;
  flex-direction: column;
  align-items: flex-start;
}
.zoomfit {
  width: 12px;
  height: 12px;
  margin: 2px 0 0 3px;
  flex: none;
}
.vup {
  width: 14px;
  height: 10px;
  margin: 7px 0 0 2px;
  flex: none;
}
.vthumb {
  width: 19px;
  height: 488px;
  margin-top: 151px;
  background: #ccc;
  flex: none;
}
.vdown {
  width: 14px;
  height: 10px;
  margin: 151px 0 0 2px;
  flex: none;
}
.cmsicon {
  width: 14px;
  height: 14px;
  margin: 9px 0 0 2px;
  flex: none;
}
.rightbars {
  flex: 1;
  display: flex;
  padding-top: 3px;
  background: #fff;
}
.rcol {
  width: 30px;
  display: flex;
  flex-direction: column;
  align-items: center;
  flex: none;
  margin-left: 1px;
}
.rcol.snaps {
  width: 26px;
  margin-left: 2px;
}
.rbtn {
  width: 26px;
  height: 26px;
  flex: none;
  display: flex;
  align-items: center;
  justify-content: center;
  box-sizing: border-box;
}
.rbtn svg {
  width: 24px;
  height: 24px;
}
.rbtn.on {
  background: #cce6ff;
  border: 1px solid #a6d2f0;
}
.hsep {
  width: 16px;
  height: 1px;
  margin: 5.500px 0;
  background: #aaa;
  flex: none;
}

/* palette */
.palette {
  height: 20px;
  box-sizing: border-box;
  border-top: 1px solid #ddd;
  display: flex;
  align-items: flex-start;
  background: #fff;
  flex: none;
}
.nocolor {
  width: 16.500px;
  height: 15px;
  flex: none;
  border-top: 1px solid #000;
  box-sizing: border-box;
}
.swatches {
  width: 1891.500px;
  height: 15px;
  display: flex;
  border-top: 1px solid #000;
  box-sizing: border-box;
  overflow: hidden;
  flex: none;
}
.swatches i {
  width: 14px;
  height: 14px;
  flex: none;
}
.palarrow {
  margin: 4px 0 0 2px;
  border-top: 4px solid transparent;
  border-bottom: 4px solid transparent;
  border-right: 5px solid #000;
}
.palscroll {
  height: 15px;
  background: #eee;
  display: flex;
  align-items: center;
  flex: none;
}
.parrow {
  width: 10px;
  height: 13px;
  margin-left: 5px;
  flex: none;
}
.parrow.right {
  margin-left: 1280px;
}
.palthumb {
  margin-left: 6px;
  width: 589px;
  height: 15px;
  background: #ccc;
  flex: none;
}

/* status bar */
.statusbar {
  height: 34px;
  background: #eee;
  display: flex;
  align-items: flex-start;
  overflow: hidden;
  flex: none;
  font-size: 14px;
}
.fslabels {
  width: 45px;
  padding-left: 2px;
  box-sizing: border-box;
  display: flex;
  flex-direction: column;
  font-size: 13px;
  line-height: 19px;
  padding-top: 1px;
  flex: none;
}
.fsboxes {
  width: 64px;
  flex: none;
}
.fillbox {
  height: 19px;
  background: #112b00;
}
.strokerow {
  display: flex;
  height: 19px;
}
.strokebox {
  width: 52px;
  display: flex;
}
.strokebox i {
  flex: 1;
  background: #000;
}
.strokebox i:first-child {
  background: #141414;
}
.strokerow span {
  margin-left: 6px;
  line-height: 19px;
}
.olabel {
  margin: 7px 0 0 6px;
  width: 25px;
  flex: none;
}
.num.opacity {
  width: 36px;
  height: 27px;
  margin-top: 5px;
  padding-left: 4px;
}
.statusbar .spin {
  margin-top: 5px;
  height: 27px;
}
.stsep {
  width: 1px;
  height: 34px;
  margin-left: 3px;
  background: #bbb;
  flex: none;
}
.eye {
  width: 12px;
  height: 12px;
  margin: 12px 0 0 7px;
  flex: none;
}
.stlock {
  width: 12px;
  height: 12px;
  margin: 12px 0 0 6px;
  flex: none;
}
.layer {
  margin-left: 3px;
  width: 96px;
  height: 34px;
  background: #fff;
  border: 1px solid #bbb;
  box-sizing: border-box;
  display: flex;
  align-items: center;
  font-weight: 600;
  flex: none;
}
.layer span {
  flex: 1;
  padding-left: 3px;
}
.message {
  margin: 6px 0 0 2px;
  width: 1419px;
  white-space: nowrap;
  flex: none;
  font-size: 15px;
}
.stsep.coords {
  margin-left: 0;
}
.xy {
  width: 79px;
  margin-left: 2px;
  line-height: 19px;
  padding-top: 1px;
  flex: none;
  font-size: 13px;
}
.xy div {
  display: flex;
  justify-content: space-between;
}
.xy code {
  font-family: "DejaVu Sans Mono", monospace;
  font-size: 13px;
}
.zlabel {
  margin: 7px 0 0 11px;
  width: 23px;
  flex: none;
}
.num.zoom {
  width: 44px;
  height: 27px;
  margin-top: 5px;
  padding: 0 2px 0 0;
  text-align: right;
}
</style>
